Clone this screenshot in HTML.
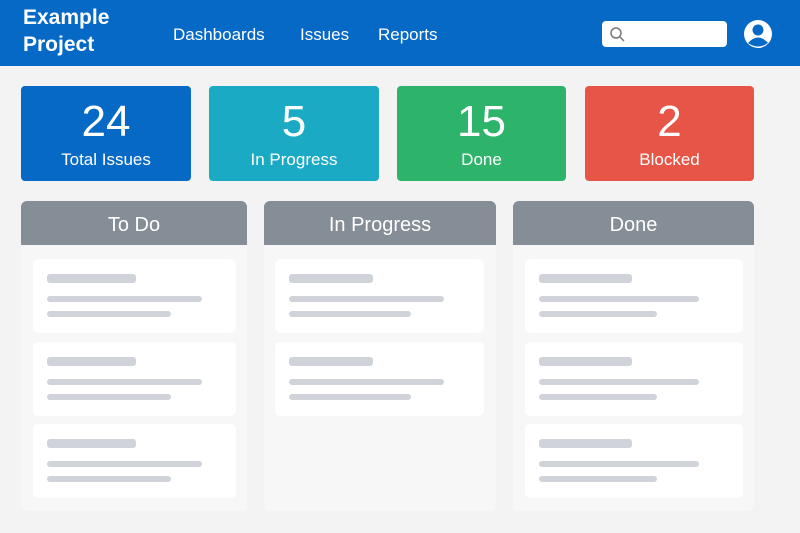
<!DOCTYPE html>
<html><head><style>
*{margin:0;padding:0;box-sizing:border-box}
body{width:800px;height:533px;background:#f3f3f3;font-family:"Liberation Sans",sans-serif;position:relative;overflow:hidden}
.hdr{position:absolute;left:0;top:0;width:800px;height:66px;background:#0669c6}
.logo{position:absolute;left:23px;top:4px;color:#fff;font-weight:bold;font-size:21px;line-height:27px}
.nav{position:absolute;top:25px;color:#fff;font-size:17px}
.search{position:absolute;left:602px;top:21px;width:125px;height:26px;background:#fff;border-radius:4px}
.stat{position:absolute;top:86px;height:95px;border-radius:4px;color:#fff;text-align:center}
.stat .n{font-size:44px;line-height:44px;margin-top:14px}
.stat .l{font-size:17px;margin-top:6px}
.col{position:absolute;top:201px;height:310px;background:#f7f7f7;border-radius:6px;overflow:hidden}
.col .h{height:44px;background:#858d96;color:#fff;font-size:20px;text-align:center;line-height:48px}
.card{position:absolute;background:#fff;border-radius:5px;height:74px}
.b{position:absolute;left:14px;background:#d0d4da;border-radius:3px}
</style></head><body>
<div class="hdr">
<div class="logo">Example<br>Project</div>
<div class="nav" style="left:173px">Dashboards</div>
<div class="nav" style="left:300px">Issues</div>
<div class="nav" style="left:378px">Reports</div>
<div class="search"><svg width="20" height="20" style="position:absolute;left:6px;top:4px" viewBox="0 0 20 20"><circle cx="8" cy="8" r="5" fill="none" stroke="#777" stroke-width="1.5"/><line x1="12" y1="12" x2="16" y2="16" stroke="#777" stroke-width="1.5"/></svg></div>
<svg style="position:absolute;left:743px;top:19px" width="30" height="30" viewBox="0 0 30 30"><circle cx="15" cy="15" r="14" fill="#fff"/><circle cx="15" cy="11" r="5.5" fill="#0669c6"/><path d="M5 24 Q15 13 25 24 Q15 31 5 24Z" fill="#0669c6"/></svg>
</div>
<div class="stat" style="left:21px;width:170px;background:#0669c6"><div class="n">24</div><div class="l">Total Issues</div></div>
<div class="stat" style="left:209px;width:170px;background:#1aaac4"><div class="n">5</div><div class="l">In Progress</div></div>
<div class="stat" style="left:397px;width:169px;background:#2eb36b"><div class="n">15</div><div class="l">Done</div></div>
<div class="stat" style="left:585px;width:169px;background:#e65546"><div class="n">2</div><div class="l">Blocked</div></div>

<div class="col" style="left:21px;width:226px"><div class="h">To Do</div>
<div class="card" style="left:12px;top:58px;width:203px"><div class="b" style="top:15px;width:89px;height:9px"></div><div class="b" style="top:37px;width:155px;height:6px"></div><div class="b" style="top:52px;width:124px;height:6px"></div></div>
<div class="card" style="left:12px;top:141px;width:203px"><div class="b" style="top:15px;width:89px;height:9px"></div><div class="b" style="top:37px;width:155px;height:6px"></div><div class="b" style="top:52px;width:124px;height:6px"></div></div>
<div class="card" style="left:12px;top:223px;width:203px"><div class="b" style="top:15px;width:89px;height:9px"></div><div class="b" style="top:37px;width:155px;height:6px"></div><div class="b" style="top:52px;width:124px;height:6px"></div></div>
</div>
<div class="col" style="left:264px;width:232px"><div class="h">In Progress</div>
<div class="card" style="left:11px;top:58px;width:209px"><div class="b" style="top:15px;width:84px;height:9px"></div><div class="b" style="top:37px;width:155px;height:6px"></div><div class="b" style="top:52px;width:122px;height:6px"></div></div>
<div class="card" style="left:11px;top:141px;width:209px"><div class="b" style="top:15px;width:84px;height:9px"></div><div class="b" style="top:37px;width:155px;height:6px"></div><div class="b" style="top:52px;width:122px;height:6px"></div></div>
</div>
<div class="col" style="left:513px;width:241px"><div class="h">Done</div>
<div class="card" style="left:12px;top:58px;width:218px"><div class="b" style="top:15px;width:93px;height:9px"></div><div class="b" style="top:37px;width:160px;height:6px"></div><div class="b" style="top:52px;width:118px;height:6px"></div></div>
<div class="card" style="left:12px;top:141px;width:218px"><div class="b" style="top:15px;width:93px;height:9px"></div><div class="b" style="top:37px;width:160px;height:6px"></div><div class="b" style="top:52px;width:118px;height:6px"></div></div>
<div class="card" style="left:12px;top:223px;width:218px"><div class="b" style="top:15px;width:93px;height:9px"></div><div class="b" style="top:37px;width:160px;height:6px"></div><div class="b" style="top:52px;width:118px;height:6px"></div></div>
</div>
</body></html>
